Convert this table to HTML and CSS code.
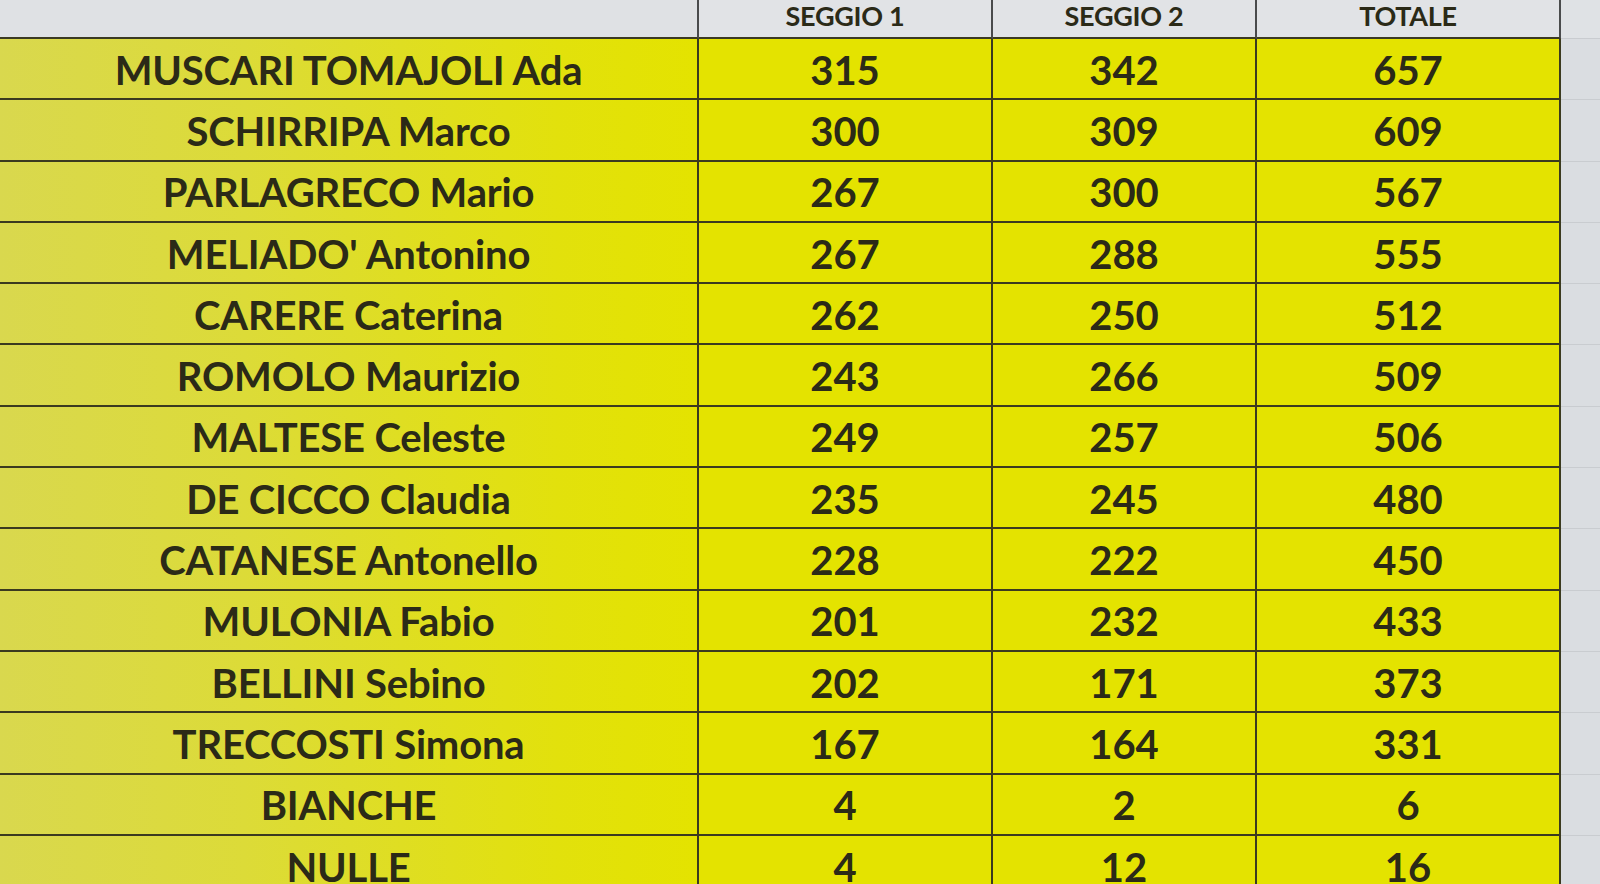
FILE: index.html
```html
<!DOCTYPE html>
<html lang="it">
<head>
<meta charset="utf-8">
<title>Risultati</title>
<link rel="stylesheet" href="styles.css">
</head>
<body>
<div class="sheet">
  <div class="grid">
    <div class="hd first"></div>
    <div class="hd">SEGGIO 1</div>
    <div class="hd">SEGGIO 2</div>
    <div class="hd">TOTALE</div>
    <div class="pad hdpad"></div>

    <div class="c name">MUSCARI TOMAJOLI Ada</div><div class="c">315</div><div class="c">342</div><div class="c">657</div><div class="pad"></div>
    <div class="c name">SCHIRRIPA Marco</div><div class="c">300</div><div class="c">309</div><div class="c">609</div><div class="pad"></div>
    <div class="c name">PARLAGRECO Mario</div><div class="c">267</div><div class="c">300</div><div class="c">567</div><div class="pad"></div>
    <div class="c name">MELIADO' Antonino</div><div class="c">267</div><div class="c">288</div><div class="c">555</div><div class="pad"></div>
    <div class="c name">CARERE Caterina</div><div class="c">262</div><div class="c">250</div><div class="c">512</div><div class="pad"></div>
    <div class="c name">ROMOLO Maurizio</div><div class="c">243</div><div class="c">266</div><div class="c">509</div><div class="pad"></div>
    <div class="c name">MALTESE Celeste</div><div class="c">249</div><div class="c">257</div><div class="c">506</div><div class="pad"></div>
    <div class="c name">DE CICCO Claudia</div><div class="c">235</div><div class="c">245</div><div class="c">480</div><div class="pad"></div>
    <div class="c name">CATANESE Antonello</div><div class="c">228</div><div class="c">222</div><div class="c">450</div><div class="pad"></div>
    <div class="c name">MULONIA Fabio</div><div class="c">201</div><div class="c">232</div><div class="c">433</div><div class="pad"></div>
    <div class="c name">BELLINI Sebino</div><div class="c">202</div><div class="c">171</div><div class="c">373</div><div class="pad"></div>
    <div class="c name">TRECCOSTI Simona</div><div class="c">167</div><div class="c">164</div><div class="c">331</div><div class="pad"></div>
    <div class="c name">BIANCHE</div><div class="c">4</div><div class="c">2</div><div class="c">6</div><div class="pad"></div>
    <div class="c name">NULLE</div><div class="c">4</div><div class="c">12</div><div class="c">16</div><div class="pad"></div>
  </div>
</div>
</body>
</html>
```

FILE: styles.css
```css
html, body {
  margin: 0;
  padding: 0;
  width: 1600px;
  height: 884px;
  overflow: hidden;
  background: #dcdfe3;
}

.sheet {
  width: 1600px;
  height: 884px;
  overflow: hidden;
  font-family: Lato, "Open Sans", "Liberation Sans", sans-serif;
  font-weight: 700;
  color: #2b2a17;
}

.grid {
  display: grid;
  grid-template-columns: 699px 294px 264px 304px 1fr;
  grid-template-rows: 39px repeat(14, 61.3px);
}

.hd {
  background: #e1e3e6;
  border-right: 2px solid #4a4b4c;
  border-bottom: 2px solid #3b3a22;
  font-size: 27px;
  line-height: 1;
  display: flex;
  align-items: flex-end;
  justify-content: center;
  padding-bottom: 8px;
  box-sizing: border-box;
  letter-spacing: -0.3px;
}

.hd.first {
  background: #dfe1e4;
}

.pad {
  background: #dadde1;
  border-bottom: 1px solid #c9ccd0;
  box-sizing: border-box;
}

.hdpad {
  background: #dfe2e5;
}

.c {
  background: #e4e300;
  border-right: 2px solid #3b3a1f;
  border-bottom: 2px solid #3b3a1f;
  box-sizing: border-box;
  display: flex;
  align-items: center;
  justify-content: center;
  font-size: 40px;
  line-height: 1;
  padding-top: 2px;
}

.c.name {
  background: linear-gradient(90deg, #d9d84e 0%, #dcdb38 35%, #e2e10c 80%, #e4e300 100%);
  letter-spacing: -0.2px;
  padding-left: 0;
}
```
